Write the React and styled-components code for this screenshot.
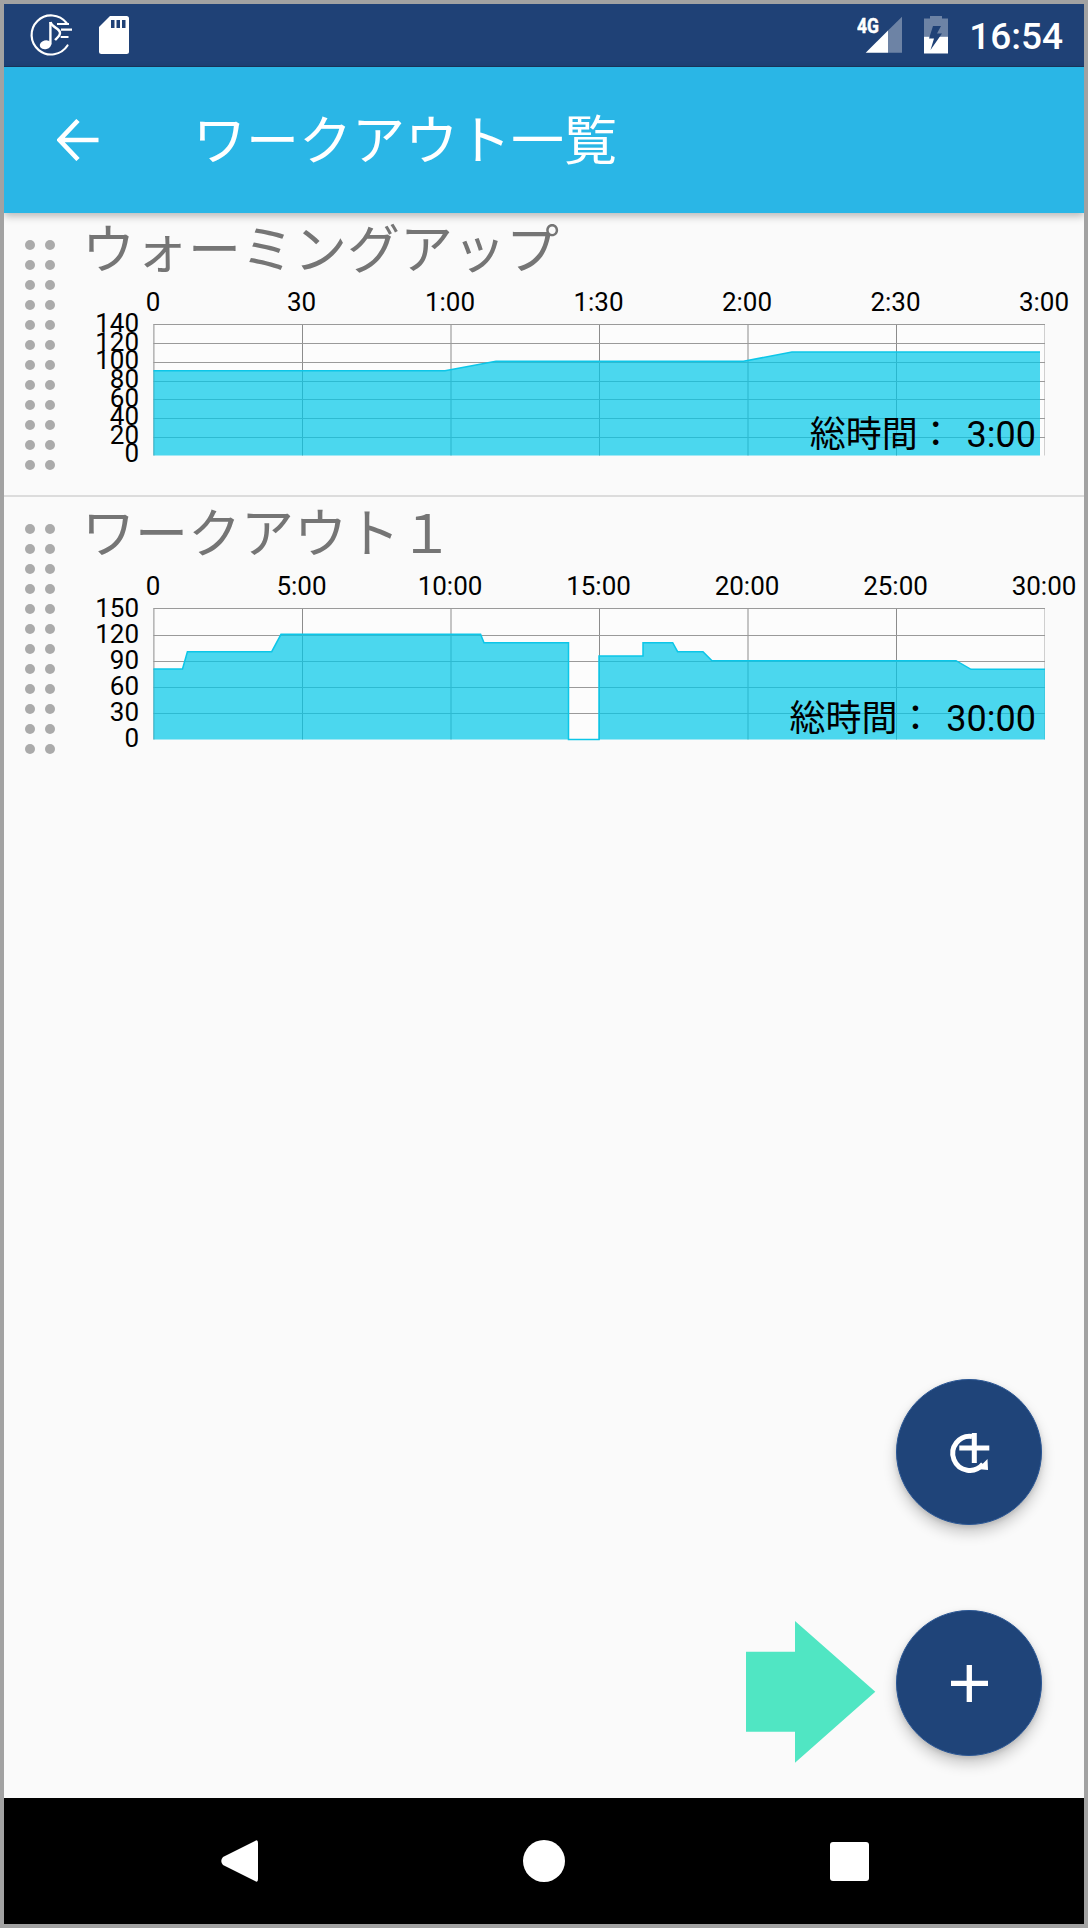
import React from "react";
import styled, { createGlobalStyle } from "styled-components";

const Global = createGlobalStyle`
  html, body { margin: 0; padding: 0; background: #a0a0a0; }
  * { box-sizing: border-box; }
`;

const Frame = styled.div`
  width: 1088px;
  height: 1928px;
  border: 4px solid #a2a2a2;
  display: flex;
  flex-direction: column;
  background: #fafafa;
  font-family: Roboto, "Noto Sans CJK JP", sans-serif;
  overflow: hidden;
`;

const StatusBar = styled.header`
  height: 63px;
  flex: none;
  background: #1f4176;
  border-bottom: 1px solid #1a365f;
  display: flex;
  align-items: center;
  justify-content: space-between;
  padding: 0 21px 0 26px;
`;

const StatusGroup = styled.div`
  display: flex;
  align-items: center;
  gap: ${(p) => p.$gap}px;
`;

const Clock = styled.span`
  color: #fff;
  font-size: 37px;
  font-weight: 500;
  line-height: 42px;
  margin-top: 3px;
`;

const AppBar = styled.div`
  height: 146px;
  flex: none;
  background: #2ab6e6;
  display: flex;
  align-items: center;
  padding-left: 53px;
  gap: 94px;
  box-shadow: 0 3px 8px rgba(0, 0, 0, 0.28);
  position: relative;
  z-index: 2;
`;

const AppTitle = styled.h1`
  margin: 4px 0 0;
  color: #fff;
  font-size: 53px;
  font-weight: 400;
  line-height: 70px;
  white-space: nowrap;
`;

const Main = styled.main`
  flex: 1;
  position: relative;
  background: #fafafa;
`;

const Card = styled.section`
  height: 284px;
  display: flex;
  border-bottom: ${(p) => (p.$divider ? "2px solid #dcdcdc" : "0")};
`;

const Handle = styled.div`
  width: 81px;
  flex: none;
  padding: 26.5px 0 0 21px;
  display: grid;
  grid-template-columns: repeat(2, 10px);
  grid-auto-rows: 10px;
  column-gap: 10px;
  row-gap: 10px;
  align-content: start;
`;

const Dot = styled.span`
  border-radius: 50%;
  background: #aaaaaa;
`;

const CardBody = styled.div`
  flex: 1;
  min-width: 0;
`;

const CardTitle = styled.h2`
  margin: 0 0 0 -3px;
  height: 70px;
  color: #757575;
  font-size: 53px;
  font-weight: 400;
  line-height: 76px;
  white-space: nowrap;
`;

const ChartWrap = styled.div`
  position: relative;
  width: 999px;
  height: 190px;
`;

const ChartSvg = styled.svg`
  display: block;
  width: 999px;
  height: 190px;
  font-family: Roboto, sans-serif;
`;

const Total = styled.div`
  position: absolute;
  right: 48px;
  top: 129px;
  color: #000;
  font-size: 36px;
  line-height: 46px;
  word-spacing: 4px;
  white-space: pre;
`;

const FabStack = styled.div`
  position: absolute;
  right: 42px;
  bottom: 42px;
  display: flex;
  flex-direction: column;
  gap: 84.5px;
`;

const Fab = styled.div`
  width: 146.5px;
  height: 146.5px;
  border-radius: 50%;
  background: #1f4479;
  border: 1px solid #2b5795;
  box-shadow: 0 8px 14px rgba(0, 0, 0, 0.2), 0 2px 5px rgba(0, 0, 0, 0.12);
  display: flex;
  align-items: center;
  justify-content: center;
`;

const HintArrow = styled.svg`
  position: absolute;
  left: 742px;
  top: 1408px;
  width: 130px;
  height: 142px;
`;

const NavBar = styled.nav`
  height: 126px;
  flex: none;
  background: #000;
  display: flex;
  align-items: center;
  justify-content: center;
  gap: 265px;
  padding-left: 2px;
`;

const NavCircle = styled.span`
  width: 42px;
  height: 42px;
  border-radius: 50%;
  background: #fff;
`;

const NavSquare = styled.span`
  width: 39px;
  height: 39px;
  border-radius: 3px;
  background: #fff;
`;

const MusicIcon = () => (
  <svg width="46" height="44" viewBox="30 14 46 44" fill="none">
    <path d="M66.5 24 A19.5 19.5 0 1 0 67.5 46.5" stroke="#fff" strokeWidth="2.2" strokeLinecap="round" />
    <ellipse cx="45.5" cy="45.8" rx="5.8" ry="4.4" fill="#fff" transform="rotate(-15 45.5 45.8)" />
    <path d="M50.4 45.5 V23" stroke="#fff" strokeWidth="2.4" />
    <path d="M50.4 23 C52 29 60 29 60 34 C60 37 57 39 55 41" stroke="#fff" strokeWidth="2.4" />
    <path d="M57 25 H69 M61 30.7 H72 M60.7 38 H68.5" stroke="#fff" strokeWidth="2.2" />
  </svg>
);

const SdIcon = () => (
  <svg width="30" height="38" viewBox="0 0 30 38">
    <path d="M11 0 H27.5 Q30 0 30 2.5 V35.5 Q30 38 27.5 38 H2.5 Q0 38 0 35.5 V11 Z" fill="#fff" />
    <path d="M12 4 H15.5 V12 H12 Z M17.5 4 H21 V12 H17.5 Z M23 4 H26.5 V12 H23 Z" fill="#1f4176" />
  </svg>
);

const SignalIcon = () => (
  <svg width="46" height="38" viewBox="859 16.5 46 38">
    <path d="M904 17.3 V53.3 H890 V31 Z" fill="#fff" opacity="0.35" />
    <path d="M867.7 53.3 H890 V31 Z" fill="#fff" />
    <text x="859" y="33.3" fill="#fff" stroke="#fff" strokeWidth="0.5" fontSize="21" fontWeight="700" fontFamily="Roboto, sans-serif" textLength="22" lengthAdjust="spacingAndGlyphs">4G</text>
  </svg>
);

const BatteryIcon = () => (
  <svg width="24" height="38" viewBox="926 16 24 38">
    <path d="M932 16 H944 V18.5 H950 V36.7 H926 V18.5 H932 Z" fill="#fff" opacity="0.35" />
    <path d="M926 36.7 H950 V53.5 H926 Z" fill="#fff" />
    <path d="M935 26 H943 L939 33.5 H944 L932.5 50 L936 38.5 H931 Z" fill="#1f4176" />
  </svg>
);

const BackIcon = () => (
  <svg width="42" height="42" viewBox="0 0 42 42" fill="none">
    <path d="M41.5 21 H3 M21 1.5 L2.5 21 L21 40.5" stroke="#fff" strokeWidth="4.6" />
  </svg>
);

const RepeatPlusIcon = () => (
  <svg width="144.5" height="144.5" viewBox="1 1 144.5 144.5" fill="none">
    <path d="M76 57.5 A17 17 0 1 0 87 85" stroke="#fff" strokeWidth="5" />
    <path d="M81.5 90 L91.5 80 L92 91 Z" fill="#fff" />
    <path d="M63.3 69 H93.3 M78.3 54 V84" stroke="#fff" strokeWidth="5" />
  </svg>
);

const PlusIcon = () => (
  <svg width="144.5" height="144.5" viewBox="1 1 144.5 144.5" fill="none">
    <path d="M55 73.3 H92 M73.3 55 V92" stroke="#fff" strokeWidth="5.3" />
  </svg>
);

const PLOT = { left: 153.4, right: 1045, top: 324.3, bottom: 455.5 };
const columns = [153.9, 302.5, 451, 599.5, 748, 896.5];

const warmup = {
  title: "ウォーミングアップ",
  total: "総時間： 3:00",
  xLabels: ["0", "30", "1:00", "1:30", "2:00", "2:30", "3:00"],
  yLabels: ["140", "120", "100", "80", "60", "40", "20", "0"],
  rows: [324.5, 343.5, 362.5, 381.5, 399.5, 418.5, 437.5],
  labelTop: 332.3,
  labelBottom: 462.3,
  line: [[153.4, 370.7], [445, 370.7], [496, 361.3], [743.5, 361.3], [792, 352], [1040, 352]],
  end: 1040,
};

const workout = {
  title: "ワークアウト１",
  total: "総時間： 30:00",
  xLabels: ["0", "5:00", "10:00", "15:00", "20:00", "25:00", "30:00"],
  yLabels: ["150", "120", "90", "60", "30", "0"],
  rows: [324.5, 351.5, 377.5, 403.5, 429.5],
  labelTop: 332.7,
  labelBottom: 463.3,
  line: [
    [153.4, 385], [182.5, 385], [187.4, 367.7], [271.7, 367.7], [281, 350.3], [480.6, 350.3],
    [484, 358.7], [568.5, 358.7], [568.5, 455.5], [599, 455.5], [599, 372], [643, 372],
    [643, 358.7], [672.7, 358.7], [677.6, 367.7], [703, 367.7], [712, 376.7], [956, 376.7],
    [971, 385.3], [1045, 385.3],
  ],
  end: 1045,
};

const Chart = ({ data }) => {
  const path = data.line.map((p) => p.join(",")).join(" ");
  const area = `${PLOT.left},${PLOT.bottom} ${path} ${data.end},${PLOT.bottom}`;
  const yStep = (data.labelBottom - data.labelTop) / (data.yLabels.length - 1);
  return (
    <ChartWrap>
      <ChartSvg viewBox="85 283 999 190">
        <rect x={PLOT.left} y={PLOT.top} width={PLOT.right - PLOT.left} height={PLOT.bottom - PLOT.top} fill="#fcfcfc" />
        {columns.map((x) => (
          <line key={x} x1={x} x2={x} y1={PLOT.top} y2={PLOT.bottom} stroke="#8c8c8c" strokeWidth="1" />
        ))}
        <line x1="1044.5" x2="1044.5" y1={PLOT.top} y2={PLOT.bottom} stroke="#cfcfcf" strokeWidth="1" />
        {data.rows.map((y) => (
          <line key={y} x1={PLOT.left} x2={PLOT.right} y1={y} y2={y} stroke="#9a9a9a" strokeWidth="1" />
        ))}
        <polygon points={area} fill="rgba(0, 200, 232, 0.7)" />
        <polyline points={path} fill="none" stroke="#0cc6e8" strokeWidth="1.5" />
        {data.xLabels.map((label, i) => (
          <text key={label} x={153 + i * 148.5} y="310.7" fontSize="26" textAnchor="middle" fill="#000">
            {label}
          </text>
        ))}
        {data.yLabels.map((label, i) => (
          <text key={label} x="139" y={data.labelTop + i * yStep} fontSize="26" textAnchor="end" fill="#000">
            {label}
          </text>
        ))}
      </ChartSvg>
      <Total>{data.total}</Total>
    </ChartWrap>
  );
};

const WorkoutCard = ({ data, divider }) => (
  <Card $divider={divider}>
    <Handle>
      {Array.from({ length: 24 }, (_, i) => (
        <Dot key={i} />
      ))}
    </Handle>
    <CardBody>
      <CardTitle>{data.title}</CardTitle>
      <Chart data={data} />
    </CardBody>
  </Card>
);

export default function App() {
  return (
    <>
      <Global />
      <Frame>
        <StatusBar>
          <StatusGroup $gap={23}>
            <MusicIcon />
            <SdIcon />
          </StatusGroup>
          <StatusGroup $gap={21}>
            <SignalIcon />
            <BatteryIcon />
            <Clock>16:54</Clock>
          </StatusGroup>
        </StatusBar>
        <AppBar>
          <BackIcon />
          <AppTitle>ワークアウト一覧</AppTitle>
        </AppBar>
        <Main>
          <WorkoutCard data={warmup} divider />
          <WorkoutCard data={workout} />
          <FabStack>
            <Fab>
              <RepeatPlusIcon />
            </Fab>
            <Fab>
              <PlusIcon />
            </Fab>
          </FabStack>
          <HintArrow viewBox="742 1408 130 142">
            <polygon points="742,1438.7 791,1438.7 791,1408 871.3,1478.7 791,1549.7 791,1518.7 742,1518.7" fill="#50e6c3" />
          </HintArrow>
        </Main>
        <NavBar>
          <svg width="37" height="42" viewBox="0 0 37 42">
            <path d="M34 1 Q37 -1 37 3 V39 Q37 43 34 41 L2 25 Q-1.5 21 2 17 Z" fill="#fff" />
          </svg>
          <NavCircle />
          <NavSquare />
        </NavBar>
      </Frame>
    </>
  );
}
